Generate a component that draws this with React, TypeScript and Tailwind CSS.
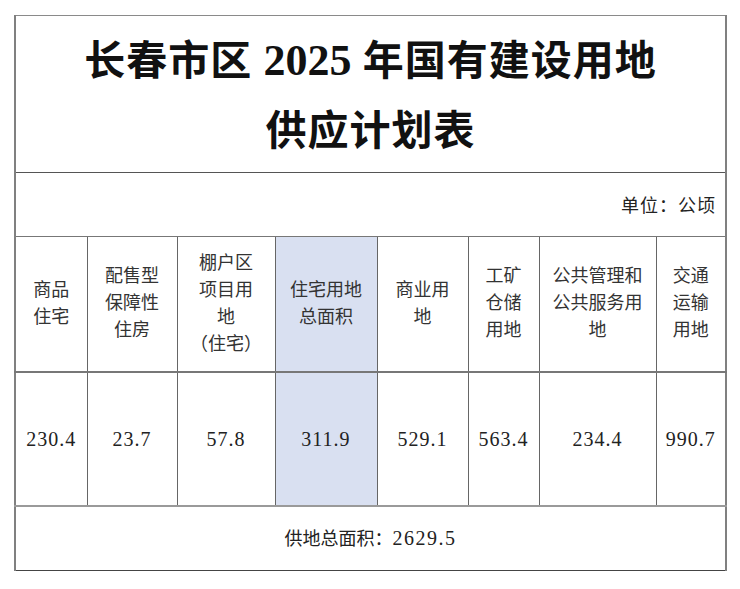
import React from "react"

const cjk = { fontFamily: '"Liberation Serif", "Noto Sans CJK SC", serif' }

const headers: { lines: string[]; hl?: boolean }[] = [
  { lines: ["商品", "住宅"] },
  { lines: ["配售型", "保障性", "住房"] },
  { lines: ["棚户区", "项目用", "地", "（住宅）"] },
  { lines: ["住宅用地", "总面积"], hl: true },
  { lines: ["商业用", "地"] },
  { lines: ["工矿", "仓储", "用地"] },
  { lines: ["公共管理和", "公共服务用", "地"] },
  { lines: ["交通", "运输", "用地"] },
]

const values = ["230.4", "23.7", "57.8", "311.9", "529.1", "563.4", "234.4", "990.7"]
const widths = [72, 90, 98, 102, 91, 71, 117, 70]

export default function App() {
  return (
    <div className="w-[740px] h-[589px] bg-white pt-[15px] pl-[14px]" style={cjk}>
      <table className="table-fixed border-collapse w-[711px] text-[#111]">
        <colgroup>
          {widths.map((w, i) => (
            <col key={i} style={{ width: w }} />
          ))}
        </colgroup>
        <tbody>
          {/* title */}
          <tr className="h-[157px]">
            <td
              colSpan={8}
              className="border-x-2 border-x-[#808080] border-t border-t-[#8a8a8a] border-b border-b-[#555] text-center align-middle pt-[4px]"
            >
              <div className="text-[41px] leading-[70px] font-bold tracking-[1px]">
                长春市区 <span className="text-[44px] tracking-[0px]">2025</span> 年国有建设用地
              </div>
              <div className="text-[41px] leading-[70px] font-bold tracking-[1px]">供应计划表</div>
            </td>
          </tr>

          {/* unit */}
          <tr className="h-[64px]">
            <td
              colSpan={8}
              className="border-x-2 border-x-[#808080] border-b border-b-[#777] text-right pr-[9px] pt-[4px] text-[18px] tracking-[1px] text-[#222]"
            >
              单位：公顷
            </td>
          </tr>

          {/* header */}
          <tr className="h-[135px]">
            {headers.map((h, i) => (
              <td
                key={i}
                className={
                  "text-center align-middle text-[18px] leading-[27px] text-[#333] border-b-2 border-b-[#777] " +
                  (i === 0 ? "border-l-2 border-l-[#808080] " : "") +
                  (i === 7 ? "border-r-2 border-r-[#808080] " : "border-r border-r-[#666] ") +
                  (h.hl ? "bg-[#d9e0f1] " : "") +
                  (i === 2 ? "border-r-[#111] " : "")
                }
              >
                {h.lines.map((l, j) => (
                  <div key={j}>{l}</div>
                ))}
              </td>
            ))}
          </tr>

          {/* data */}
          <tr className="h-[134px]">
            {values.map((v, i) => (
              <td
                key={i}
                className={
                  "text-center align-middle text-[20px] text-[#222] border-b-2 border-b-[#9a9a9a] " +
                  (i === 0 ? "border-l-2 border-l-[#808080] " : "") +
                  (i === 7 ? "border-r-2 border-r-[#808080] " : "border-r border-r-[#666] ") +
                  (headers[i].hl ? "bg-[#d9e0f1] " : "") +
                  (i === 2 ? "border-r-[#111] " : "")
                }
              >
                <span className="tracking-[1px]">{v}</span>
              </td>
            ))}
          </tr>

          {/* total */}
          <tr className="h-[65px]">
            <td
              colSpan={8}
              className="border-x-2 border-x-[#808080] border-b border-b-[#444] text-center text-[18px] text-[#222]"
            >
              供地总面积：<span className="text-[20px] tracking-[1.5px]">2629.5</span>
            </td>
          </tr>
        </tbody>
      </table>
    </div>
  )
}
